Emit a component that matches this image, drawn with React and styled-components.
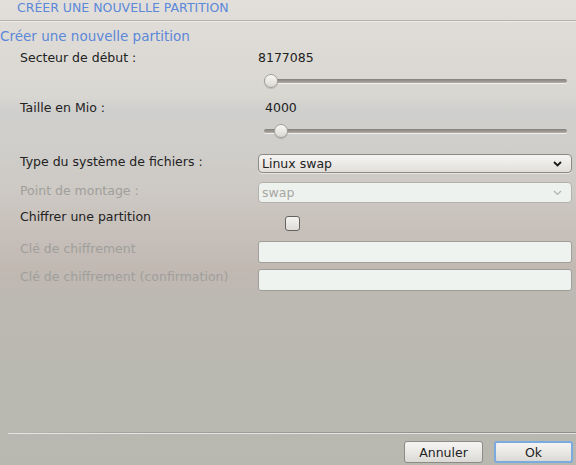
import React from "react";
import styled, { createGlobalStyle } from "styled-components";

const Global = createGlobalStyle`
  html, body { margin: 0; padding: 0; }
  body {
    width: 576px;
    height: 465px;
    overflow: hidden;
    font-family: "DejaVu Sans", "Liberation Sans", sans-serif;
    font-size: 12.5px;
  }
`;

const Page = styled.div`
  width: 576px;
  height: 465px;
  display: flex;
  flex-direction: column;
  background: linear-gradient(
    to bottom,
    #e2dfdb 0px,
    #dedbd6 40px,
    #d9d7d2 95px,
    #cfcfcd 110px,
    #d0cfcc 140px,
    #cdc9c4 190px,
    #c6beb8 240px,
    #c1b8b2 270px,
    #bbb9b2 300px,
    #b8b8b0 465px
  );
  color: #222;
`;

const Header = styled.div`
  height: 20px;
  padding-left: 17px;
  font-size: 12.5px;
  line-height: 16px;
  color: #5b88d8;
  border-bottom: 1px solid #b4b2ae;
  box-shadow: 0 1px 0 #ecebe8;
`;

const Title = styled.div`
  margin-top: 6px;
  font-size: 13.5px;
  line-height: 18px;
  color: #5b88d8;
`;

const Form = styled.div`
  display: flex;
  flex-direction: column;
  padding: 0 4px 0 20px;
`;

const Row = styled.div`
  display: grid;
  grid-template-columns: 238px 1fr;
  align-items: ${(p) => (p.$center ? "center" : "start")};
  height: ${(p) => p.$h}px;
  margin-top: ${(p) => p.$mt || 0}px;
`;

const Label = styled.div`
  line-height: 15px;
  padding-top: ${(p) => p.$pt || 0}px;
  color: ${(p) => (p.$disabled ? "#9f9f9b" : "#222")};
  white-space: nowrap;
`;

const Value = styled.div`
  line-height: 15px;
  padding-left: ${(p) => p.$pl || 0}px;
`;

const SliderTrack = styled.div`
  position: relative;
  margin: 0 5px 0 6px;
  height: 4px;
  border-radius: 2px;
  background: linear-gradient(to bottom, #86827b 0%, #9d9891 60%, #b4afa8 100%);
  box-shadow: 0 1px 0 #f1efec;
`;

const Handle = styled.div`
  position: absolute;
  top: 50%;
  width: 12px;
  height: 12px;
  margin-top: -7px;
  margin-left: -7px;
  border-radius: 50%;
  border: 1px solid #a3a09b;
  background: linear-gradient(to bottom, #f7f6f4 0%, #e8e6e2 60%, #d8d6d1 100%);
  box-shadow: 0 1px 1px rgba(0, 0, 0, 0.15);
`;

const Combo = styled.div`
  height: ${(p) => p.$h}px;
  box-sizing: border-box;
  border: 1px solid ${(p) => (p.$disabled ? "#b3b1ac" : "#8d8a85")};
  border-radius: 4px;
  background: ${(p) =>
    p.$disabled
      ? "#eef2ee"
      : "linear-gradient(to bottom, #f6f5f3 0%, #ebe9e6 55%, #e0ded9 100%)"};
  display: flex;
  align-items: center;
  justify-content: space-between;
  padding: 0 9px 0 3px;
  color: ${(p) => (p.$disabled ? "#a6a6a3" : "#222")};
  font-size: 12.5px;
  box-shadow: ${(p) => (p.$disabled ? "none" : "0 1px 0 rgba(255,255,255,0.5)")};
`;

const Chevron = styled.svg`
  width: 9px;
  height: 6px;
  flex: none;
`;

const CheckBox = styled.div`
  width: 13px;
  height: 13px;
  margin-left: 27px;
  margin-top: 7px;
  border: 1px solid #66635f;
  border-radius: 3px;
  background: linear-gradient(to bottom, #f4f3f1, #dedcd8);
`;

const TextInput = styled.div`
  height: 22px;
  box-sizing: border-box;
  border: 1px solid #a09e99;
  border-radius: 3px;
  background: #eff3ef;
`;

const Spacer = styled.div`
  flex: 1;
`;

const Footer = styled.div`
  display: flex;
  flex-direction: column;
  padding-bottom: 2px;
`;

const Separator = styled.div`
  margin-left: 8px;
  height: 1px;
  background: linear-gradient(to right, rgba(140,139,135,0) 0%, #a3a29e 20%, #8e8d89 100%);
  box-shadow: 0 1px 0 rgba(240,240,236,0.8);
`;

const Buttons = styled.div`
  display: flex;
  justify-content: flex-end;
  gap: 11px;
  padding: 8px 3px 0 0;
`;

const Button = styled.div`
  width: 79px;
  height: 22px;
  box-sizing: border-box;
  display: flex;
  align-items: center;
  justify-content: center;
  font-size: 12.5px;
  color: #222;
  border-radius: 3px;
  border: ${(p) => (p.$primary ? "2px solid #7aaade" : "1px solid #8e8b86")};
  background: linear-gradient(to bottom, #f5f4f2 0%, #e9e7e4 55%, #dbd9d5 100%);
`;

const ChevronIcon = ({ disabled }) => (
  <Chevron viewBox="0 0 9 6">
    <path
      d="M1 1 L4.5 4.5 L8 1"
      fill="none"
      stroke={disabled ? "#b0b0ad" : "#1a1a1a"}
      strokeWidth={disabled ? 1.2 : 1.8}
    />
  </Chevron>
);

const TRACK_W = 303;
const HANDLE_R = 7;
const Slider = ({ frac }) => (
  <SliderTrack>
    <Handle style={{ left: `${HANDLE_R + frac * (TRACK_W - 2 * HANDLE_R)}px` }} />
  </SliderTrack>
);

export default function App() {
  return (
    <>
      <Global />
      <Page>
        <Header>CRÉER UNE NOUVELLE PARTITION</Header>
        <Title>Créer une nouvelle partition</Title>
        <Form>
          <Row $h={16} $mt={4} $center>
            <Label>Secteur de début :</Label>
            <Value $pl={-2}>8177085</Value>
          </Row>
          <Row $h={16} $mt={8} $center>
            <div />
            <Slider frac={0} />
          </Row>
          <Row $h={16} $mt={10} $center>
            <Label>Taille en Mio :</Label>
            <Value $pl={7}>4000</Value>
          </Row>
          <Row $h={16} $mt={8} $center>
            <div />
            <Slider frac={0.034} />
          </Row>
          <Row $h={20} $mt={15}>
            <Label $pt={0}>Type du système de fichiers :</Label>
            <Combo $h={19}>
              <span>Linux swap</span>
              <ChevronIcon />
            </Combo>
          </Row>
          <Row $h={21} $mt={8}>
            <Label $disabled $pt={1}>Point de montage :</Label>
            <Combo $h={21} $disabled>
              <span>swap</span>
              <ChevronIcon disabled />
            </Combo>
          </Row>
          <Row $h={22} $mt={6}>
            <Label>Chiffrer une partition</Label>
            <CheckBox />
          </Row>
          <Row $h={22} $mt={10}>
            <Label $disabled $pt={0}>Clé de chiffrement</Label>
            <TextInput />
          </Row>
          <Row $h={22} $mt={6}>
            <Label $disabled $pt={0}>Clé de chiffrement (confirmation)</Label>
            <TextInput />
          </Row>
        </Form>
        <Spacer />
        <Footer>
          <Separator />
          <Buttons>
            <Button>Annuler</Button>
            <Button $primary>Ok</Button>
          </Buttons>
        </Footer>
      </Page>
    </>
  );
}
